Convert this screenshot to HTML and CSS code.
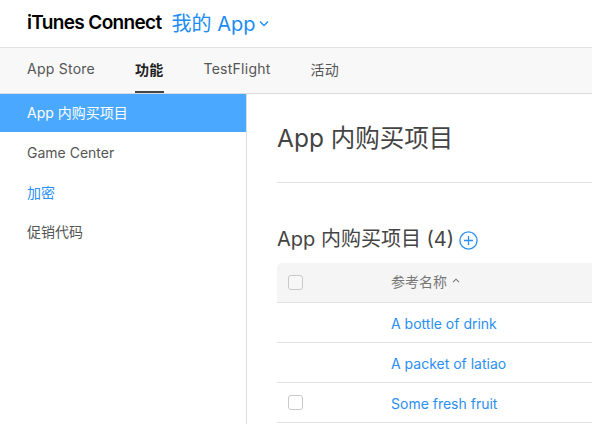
FILE: index.html
```html
<!DOCTYPE html>
<html lang="zh">
<head>
<meta charset="utf-8">
<title>iTunes Connect</title>
<link rel="stylesheet" href="styles.css">
</head>
<body>
<header class="topbar">
  <span class="brand">iTunes Connect</span>
  <span class="app-menu">我的 App
    <svg class="chev" width="10" height="7" viewBox="0 0 10 7"><path d="M1 1.5 L5 5.5 L9 1.5" fill="none" stroke="currentColor" stroke-width="1.3"/></svg>
  </span>
</header>
<nav class="tabs">
  <a class="tab">App Store</a>
  <a class="tab active">功能</a>
  <a class="tab">TestFlight</a>
  <a class="tab">活动</a>
</nav>
<div class="layout">
  <aside class="sidebar">
    <a class="side-item selected">App 内购买项目</a>
    <a class="side-item">Game Center</a>
    <a class="side-item link">加密</a>
    <a class="side-item">促销代码</a>
  </aside>
  <main class="main">
    <h1 class="title">App 内购买项目</h1>
    <hr class="rule">
    <h2 class="section">App 内购买项目 (4)
      <svg class="plus" width="19" height="19" viewBox="0 0 19 19"><circle cx="9.5" cy="9.5" r="8.6" fill="none" stroke="currentColor" stroke-width="1.3"/><path d="M9.5 5 V14 M5 9.5 H14" stroke="currentColor" stroke-width="1.3"/></svg>
    </h2>
    <div class="table">
      <div class="row head">
        <div class="cell check"><span class="box"></span></div>
        <div class="cell name">参考名称 <svg class="sort" width="8" height="5" viewBox="0 0 8 5"><path d="M1 4.2 L4 1.2 L7 4.2" fill="none" stroke="currentColor" stroke-width="1.1"/></svg></div>
      </div>
      <div class="row">
        <div class="cell check"></div>
        <div class="cell name"><a class="item-link">A bottle of drink</a></div>
      </div>
      <div class="row">
        <div class="cell check"></div>
        <div class="cell name"><a class="item-link">A packet of latiao</a></div>
      </div>
      <div class="row">
        <div class="cell check"><span class="box"></span></div>
        <div class="cell name"><a class="item-link">Some fresh fruit</a></div>
      </div>
    </div>
  </main>
</div>
</body>
</html>
```
FILE: styles.css
```css
* { box-sizing: border-box; }
html, body { margin: 0; padding: 0; }
body {
  font-family: Inter, "Noto Sans CJK SC", sans-serif;
  background: #fff;
  color: #555;
  width: 592px;
  height: 424px;
  overflow: hidden;
}
a { text-decoration: none; }

.topbar {
  height: 48px;
  display: flex;
  align-items: center;
  padding: 0 0 2px 27px;
  border-bottom: 1px solid #e2e2e2;
}
.brand {
  font-size: 19px;
  font-weight: 600;
  color: #000;
  letter-spacing: -0.65px;
}
.app-menu {
  margin-left: 10px;
  font-size: 20px;
  color: #1a8cf3;
  display: flex;
  align-items: center;
}
.chev { margin-left: 4px; margin-top: 2px; }

.tabs {
  height: 46px;
  background: #f8f8f8;
  border-bottom: 1px solid #dcdcdc;
  display: flex;
  padding-left: 27px;
}
.tab {
  font-size: 14px;
  letter-spacing: 0.25px;
  color: #555;
  display: flex;
  align-items: center;
  height: 100%;
  margin-right: 40px;
  border-bottom: 2px solid transparent;
  padding-bottom: 2px;
}
.tab.active {
  color: #222;
  font-weight: 600;
  border-bottom-color: #444;
}

.layout {
  display: flex;
  height: 330px;
}
.sidebar {
  width: 247px;
  border-right: 1px solid #dedede;
  display: flex;
  flex-direction: column;
}
.side-item {
  height: 39px;
  display: flex;
  align-items: center;
  padding-left: 27px;
  padding-top: 2px;
  font-size: 14px;
  color: #555;
}
.side-item.selected {
  height: 38px;
  padding-top: 0;
  padding-bottom: 2px;
  background: #4aa8ff;
  color: #fff;
}
.side-item.link { color: #2a8ff2; }

.main {
  flex: 1;
  padding-left: 30px;
}
.title {
  margin: 0;
  padding-top: 26px;
  height: 88px;
  font-size: 24.5px;
  font-weight: 400;
  color: #444;
  line-height: 36px;
}
.rule {
  margin: 0;
  border: 0;
  border-top: 1px solid #e2e2e2;
}
.section {
  margin: 0;
  padding-top: 42px;
  font-size: 20px;
  font-weight: 400;
  color: #444;
  line-height: 28px;
  display: flex;
  align-items: center;
}
.plus { color: #2a8ff2; margin-left: 5px; margin-top: 2px; }

.table { margin-top: 10px; }
.row {
  height: 40px;
  display: flex;
  align-items: center;
  border-bottom: 1px solid #e2e2e2;
}
.row.head {
  background: #f5f5f5;
  border-top-left-radius: 5px;
}
.cell.check {
  width: 114px;
  padding-left: 11px;
  display: flex;
  align-items: center;
}
.box {
  width: 15px;
  height: 15px;
  border: 1px solid #c9c9c9;
  border-radius: 3px;
  background: #fff;
}
.head .box { background: #f7f7f7; }
.cell.name {
  font-size: 14px;
  color: #777;
  display: flex;
  align-items: center;
  padding-top: 1px;
}
.head .cell.name { padding-top: 0; padding-bottom: 3px; }
.sort { margin-left: 5px; margin-bottom: 1px; color: #777; }
.item-link { color: #2a8ff2; }
```
